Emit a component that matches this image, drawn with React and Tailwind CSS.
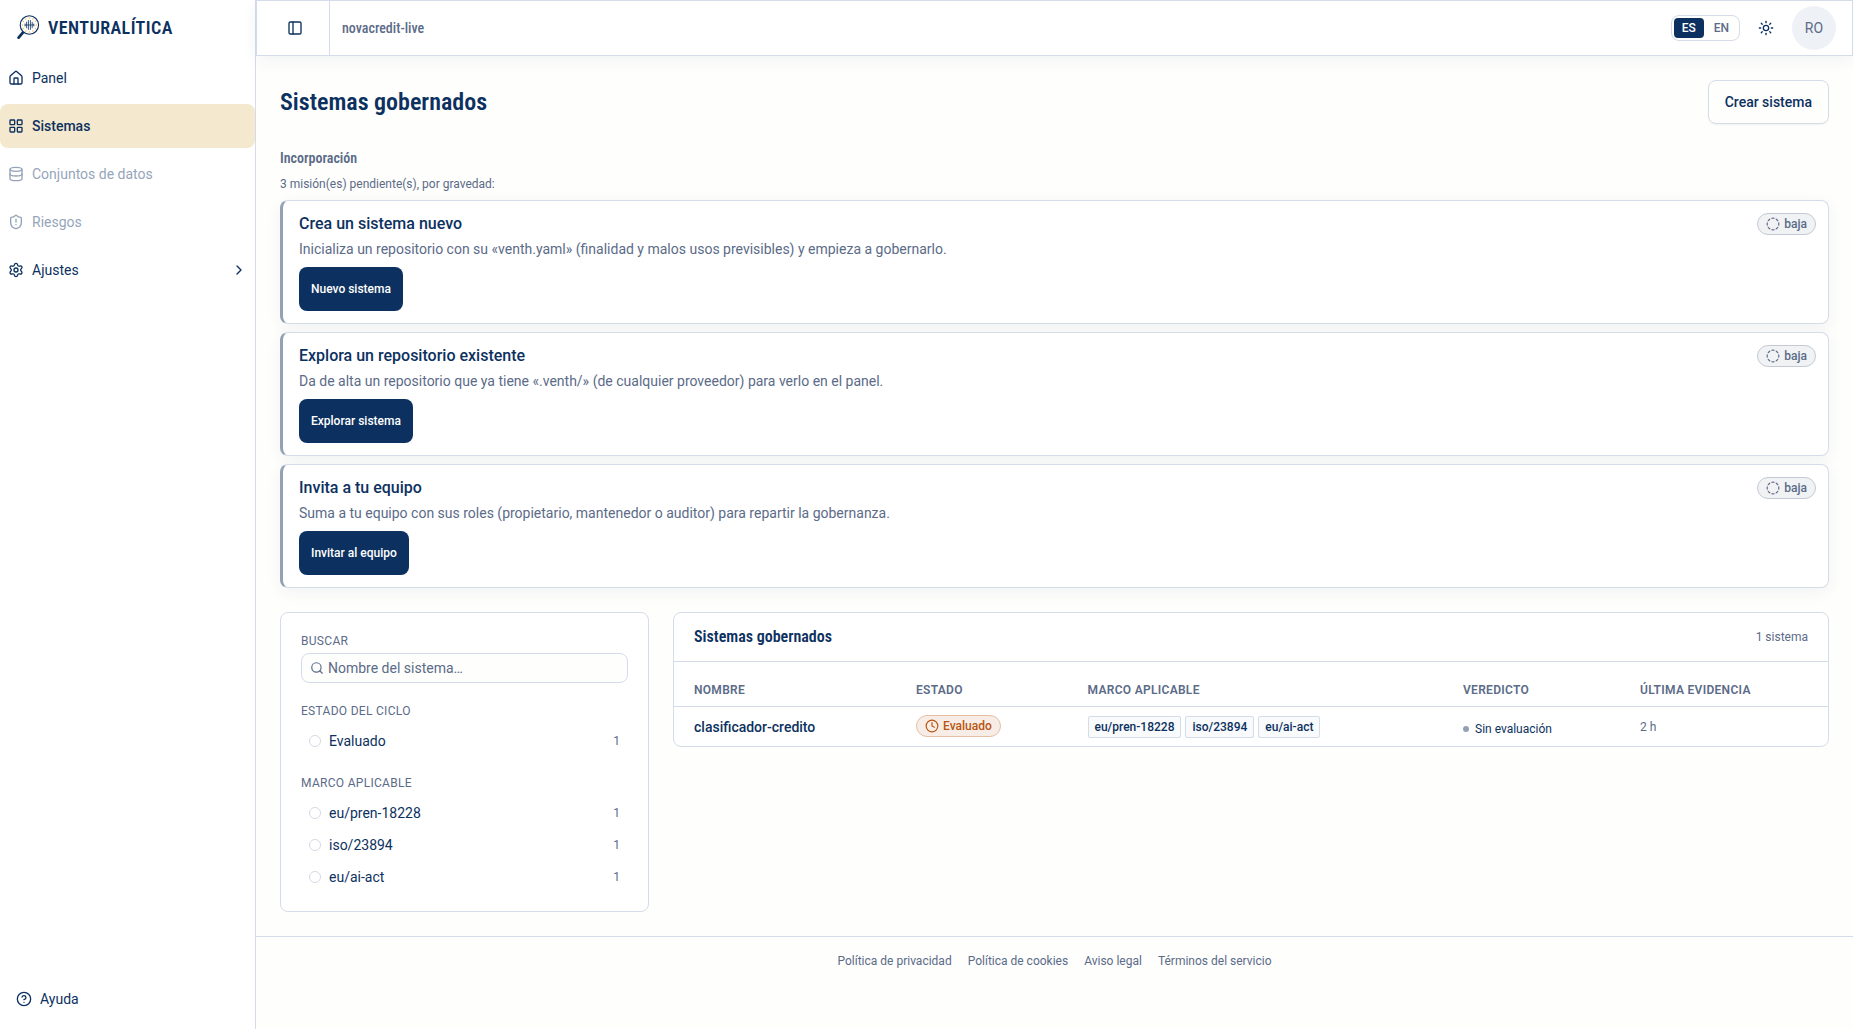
import { useState } from 'react'
import {
  House, LayoutGrid, Database, ShieldAlert, Settings, ChevronRight,
  CircleQuestionMark, PanelLeft, Sun, Search, Clock, CircleDashed,
} from 'lucide-react'

const NAV = [
  { label: 'Panel', icon: House },
  { label: 'Sistemas', icon: LayoutGrid, active: true },
  { label: 'Conjuntos de datos', icon: Database, disabled: true },
  { label: 'Riesgos', icon: ShieldAlert, disabled: true },
  { label: 'Ajustes', icon: Settings, expandable: true },
]

const MISSIONS = [
  {
    title: 'Crea un sistema nuevo',
    text: 'Inicializa un repositorio con su «venth.yaml» (finalidad y malos usos previsibles) y empieza a gobernarlo.',
    action: 'Nuevo sistema',
  },
  {
    title: 'Explora un repositorio existente',
    text: 'Da de alta un repositorio que ya tiene «.venth/» (de cualquier proveedor) para verlo en el panel.',
    action: 'Explorar sistema',
  },
  {
    title: 'Invita a tu equipo',
    text: 'Suma a tu equipo con sus roles (propietario, mantenedor o auditor) para repartir la gobernanza.',
    action: 'Invitar al equipo',
  },
]

const FRAMEWORKS = ['eu/pren-18228', 'iso/23894', 'eu/ai-act']

const LEGAL = ['Política de privacidad', 'Política de cookies', 'Aviso legal', 'Términos del servicio']

function Logo() {
  const dots = Array.from({ length: 12 }, (_, i) => {
    const a = (i * Math.PI) / 6
    return { x: 13.4 + 7 * Math.cos(a), y: 10 + 7 * Math.sin(a) }
  })
  return (
    <svg width="24" height="26" viewBox="0 0 24 26" fill="none">
      <path d="M7.5 16.8 L2.6 22.6" stroke="#0c3160" strokeWidth="2.8" strokeLinecap="round" />
      <circle cx="13.4" cy="10" r="9.2" fill="#fff" stroke="#0c3160" strokeWidth="1.1" />
      {dots.map((d, i) => <circle key={i} cx={d.x} cy={d.y} r="0.8" fill="#ecc25c" />)}
      <path
        d="M12.4 5.5v9M14.4 5.5v9M10.6 7.2v5.6M16.2 7.2v5.6M9 9v2M17.8 9v2M9.5 10h8"
        stroke="#0c3160" strokeWidth="0.8" strokeLinecap="round"
      />
    </svg>
  )
}

function Sidebar() {
  return (
    <aside className="w-64 shrink-0 bg-white border-r border-[#d5dce9] flex flex-col">
      <div className="h-14 flex items-center gap-2 pl-4">
        <Logo />
        <span className="font-['Roboto_Condensed',Roboto,sans-serif] [font-stretch:75%] text-lg font-semibold tracking-[0.45px]">
          VENTURALÍTICA
        </span>
      </div>
      <nav className="flex flex-col gap-1">
        {NAV.map(({ label, icon: Icon, active, disabled, expandable }) => (
          <a
            key={label}
            className={`h-11 flex items-center gap-2 px-2 rounded-lg text-sm ${active ? 'bg-[#f4e9cf] font-medium' : ''} ${disabled ? 'opacity-50 text-[#2c4a75]' : ''}`}
          >
            <Icon size={16} />
            <span className="flex-1">{label}</span>
            {expandable && <ChevronRight size={16} />}
          </a>
        ))}
      </nav>
      <a className="mt-auto mb-2 h-11 flex items-center gap-2 px-4 text-sm">
        <CircleQuestionMark size={16} />
        Ayuda
      </a>
    </aside>
  )
}

function Header() {
  const [lang, setLang] = useState('ES')
  return (
    <header className="h-14 shrink-0 bg-white border border-[#d5dce9] flex items-center shadow-[0_4px_16px_rgba(11,48,96,0.06)]">
      <div className="h-full flex items-center pl-4 pr-3 border-r border-[#d5dce9]">
        <button className="size-11 flex items-center justify-center"><PanelLeft size={16} /></button>
      </div>
      <span className="pl-3 font-['Roboto_Condensed',Roboto,sans-serif] [font-stretch:75%] text-sm font-medium text-[#5b6b88]">
        novacredit-live
      </span>
      <div className="ml-auto flex items-center gap-1 pr-4">
        <div className="h-[26px] flex items-center gap-0.5 p-0.5 border border-[#d5dce9] rounded-lg bg-[#fefefc]">
          {['ES', 'EN'].map(l => (
            <button
              key={l}
              onClick={() => setLang(l)}
              className={`h-5 px-2 rounded text-xs font-medium ${lang === l ? 'bg-[#0c3160] text-white' : 'text-[#5b6b88]'}`}
            >
              {l}
            </button>
          ))}
        </div>
        <button className="size-11 flex items-center justify-center"><Sun size={16} /></button>
        <div className="size-11 rounded-full bg-[#eef1f6] flex items-center justify-center text-sm text-[#5b6b88]">RO</div>
      </div>
    </header>
  )
}

function MissionCard({ title, text, action }) {
  return (
    <li className="h-31 bg-white border border-[#d5dce9] border-l-3 border-l-[#94a0b4] rounded-lg pl-4 pr-3 py-3 flex items-start justify-between shadow-[0_4px_16px_rgba(11,48,96,0.06)]">
      <div>
        <h3 className="text-base leading-[22px] font-medium">{title}</h3>
        <p className="mt-1 text-sm text-[#5b6b88]">{text}</p>
        <button className="mt-2 h-11 px-3 rounded-lg bg-[#0c3160] text-white text-xs font-medium">{action}</button>
      </div>
      <span className="h-[22px] flex items-center gap-1 px-2 rounded-full border border-[#c3cad6] bg-[#f0f2f4] text-xs font-medium text-[#5b6b88]">
        <CircleDashed size={14} />
        baja
      </span>
    </li>
  )
}

function FilterOption({ label }) {
  return (
    <label className="h-8 shrink-0 flex items-center gap-2 px-2 text-sm">
      <span className="size-3 rounded-full border border-[#d5dae2]" />
      <span className="flex-1">{label}</span>
      <span className="text-xs text-[#5b6b88]">1</span>
    </label>
  )
}

function Filters() {
  return (
    <section className="w-[369px] h-[300px] shrink-0 bg-white border border-[#d5dce9] rounded-lg px-5 pt-5 flex flex-col">
      <h4 className="text-xs leading-4 tracking-[0.3px] text-[#5b6b88]">BUSCAR</h4>
      <div className="mt-1 h-[30px] shrink-0 border border-[#d5dce9] rounded-lg bg-[#fefefc] flex items-center px-2">
        <Search size={14} className="text-[#5b6b88]" />
        <input
          placeholder="Nombre del sistema…"
          className="flex-1 ml-1 text-sm outline-none placeholder:text-[#5b6b88]"
        />
      </div>
      <h4 className="mt-5 mb-[6px] text-xs leading-4 tracking-[0.3px] text-[#5b6b88]">ESTADO DEL CICLO</h4>
      <FilterOption label="Evaluado" />
      <h4 className="mt-[18px] mb-[6px] text-xs leading-4 tracking-[0.3px] text-[#5b6b88]">MARCO APLICABLE</h4>
      {FRAMEWORKS.map(f => <FilterOption key={f} label={f} />)}
    </section>
  )
}

function SystemsTable() {
  return (
    <section className="flex-1 h-[135px] bg-white border border-[#d5dce9] rounded-lg overflow-hidden">
      <div className="h-[49px] px-5 border-b border-[#d5dce9] flex items-center justify-between">
        <h2 className="font-['Roboto_Condensed',Roboto,sans-serif] [font-stretch:75%] text-base font-semibold">Sistemas gobernados</h2>
        <span className="text-xs text-[#5b6b88]">1 sistema</span>
      </div>
      <div className="h-[45px] pt-[11px] px-5 border-b border-[#d5dce9] grid grid-cols-[222px_171.5px_375.5px_177px_1fr] items-center text-xs font-semibold tracking-[0.3px] text-[#5b6b88]">
        <span>NOMBRE</span>
        <span>ESTADO</span>
        <span>MARCO APLICABLE</span>
        <span>VEREDICTO</span>
        <span>ÚLTIMA EVIDENCIA</span>
      </div>
      <div className="h-10 px-5 grid grid-cols-[222px_171.5px_375.5px_177px_1fr] items-center">
        <span className="text-sm font-medium">clasificador-credito</span>
        <span className="mb-[2px] h-[22px] w-fit flex items-center gap-1 px-2 rounded-full border border-[#e5bfa5] bg-[#f8ede6] text-xs font-medium text-[#b8540f]">
          <Clock size={14} />
          Evaluado
        </span>
        <div className="flex gap-1">
          {FRAMEWORKS.map(f => (
            <span key={f} className="h-[22px] flex items-center px-1.5 border border-[#d5dce9] bg-[#f8fafc] rounded-xs text-xs font-medium">
              {f}
            </span>
          ))}
        </div>
        <span className="mt-1 flex items-center gap-1.5 text-xs">
          <i className="size-1.5 rounded-full bg-[#94a0b4]" />
          Sin evaluación
        </span>
        <span className="text-xs text-[#5b6b88]">2 h</span>
      </div>
    </section>
  )
}

export default function App() {
  return (
    <div className="h-screen flex overflow-hidden bg-[#fefefc] text-[#0c3160] font-[Roboto,sans-serif]">
      <Sidebar />
      <div className="flex-1 flex flex-col">
        <Header />
        <main className="px-6 pt-6 pb-6">
          <div className="h-11 flex items-center justify-between">
            <h1 className="font-['Roboto_Condensed',Roboto,sans-serif] [font-stretch:75%] text-2xl font-semibold">Sistemas gobernados</h1>
            <button className="h-11 px-4 border border-[#d5dce9] rounded-lg text-sm font-medium shadow-xs">Crear sistema</button>
          </div>
          <h2 className="mt-6 font-['Roboto_Condensed',Roboto,sans-serif] [font-stretch:75%] text-sm font-semibold text-[#5b6b88]">
            Incorporación
          </h2>
          <p className="mt-2 mb-2 text-xs text-[#5b6b88]">3 misión(es) pendiente(s), por gravedad:</p>
          <ul className="flex flex-col gap-2">
            {MISSIONS.map(m => <MissionCard key={m.title} {...m} />)}
          </ul>
          <div className="mt-6 flex items-start gap-6">
            <Filters />
            <SystemsTable />
          </div>
        </main>
        <footer className="border-t border-[#d5dce9] pt-4 flex justify-center gap-4 text-xs text-[#5b6b88]">
          {LEGAL.map(l => <a key={l}>{l}</a>)}
        </footer>
      </div>
    </div>
  )
}
